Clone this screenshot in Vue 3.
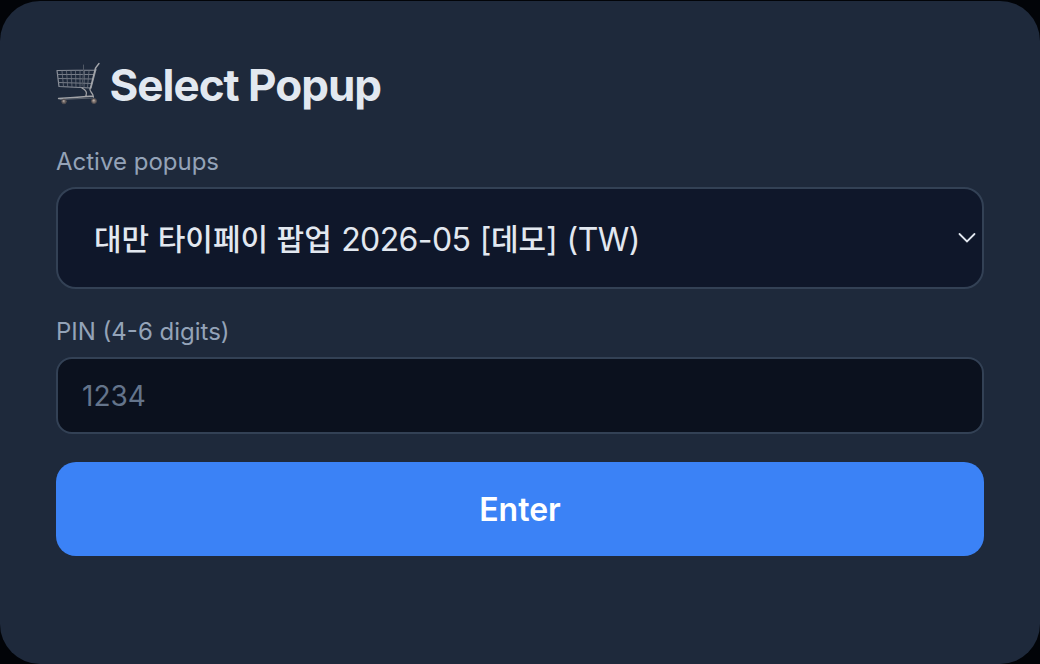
<script setup>
import { computed, ref } from 'vue'

const popups = [
  { id: 1, name: '대만 타이페이 팝업 2026-05 [데모]', country: 'TW' }
]

const selected = ref(1)
const pin = ref('')

// Hangul runs are set slightly smaller than the latin text around them
const parts = computed(() => {
  const p = popups.find((x) => x.id === selected.value)
  return `${p.name} (${p.country})`
    .split(/([가-힣]+(?: [가-힣]+)*)/)
    .filter(Boolean)
    .map((text) => ({ text, hangul: /[가-힣]/.test(text) }))
})

function nextPopup() {
  const i = popups.findIndex((x) => x.id === selected.value)
  selected.value = popups[(i + 1) % popups.length].id
}

function onEnter() {
  if (!/^\d{4,6}$/.test(pin.value)) return
  pin.value = ''
}
</script>

<template>
  <form class="card" @submit.prevent="onEnter">
    <h1 class="title">
      <svg class="cart" viewBox="0 0 46 46" fill="none" stroke-linecap="round">
        <path d="M2 11.5 41 11M2 11.5 4 27.5M41 10 36 29M4 27.5 36 29" stroke="#8b909a" stroke-width="1.2" />
        <path d="M3 15.5H39.5M3.3 19.5 38.5 20M3.8 23.5 37.5 24.5" stroke="#808690" stroke-width=".9" />
        <path d="M7 12 8.5 27.5M11.5 12 12.7 27.5M16 12 17 28M20.5 12 21 28M25 12V28M29.5 12 29 28.5M34 12 32.5 28.5" stroke="#6d7480" stroke-width=".8" />
        <path d="M28.5 6V13L27 27" stroke="#505865" stroke-width="1" />
        <path d="M44 4.5 40.5 9 35.5 29" stroke="#a5a7ac" stroke-width="1.4" />
        <path d="M27 29C31 31 32.5 33 31 36.5M35 29.5C34 33 38 33 38.5 38M38 37 19 38.5 3.5 39.5" stroke="#a3a4a8" stroke-width="1.3" />
        <path d="M5 40.5 38 39" stroke="#6b717b" stroke-width=".8" />
        <circle cx="9" cy="42.5" r="2.3" fill="#746b69" stroke="#514d50" />
        <circle cx="39" cy="42" r="2.5" fill="#827671" stroke="#514d50" />
        <circle cx="8.7" cy="42" r="1" fill="#a59b97" />
        <circle cx="38.7" cy="41.5" r="1.1" fill="#b5a9a2" />
      </svg>
      <span>Select Popup</span>
    </h1>

    <label class="label" for="popup">Active popups</label>
    <button id="popup" class="select" type="button" @click="nextPopup">
      <span class="value"><span v-for="(part, i) in parts" :key="i" :class="{ hangul: part.hangul }">{{ part.text }}</span></span>
      <svg class="chevron" viewBox="0 0 18 12" fill="none">
        <path d="M1.5 2 9 9.5 16.5 2" stroke="#e2e8f0" stroke-width="1.8" stroke-linecap="round" />
      </svg>
    </button>

    <label class="label" for="pin">PIN (4-6 digits)</label>
    <input id="pin" v-model="pin" class="pin" inputmode="numeric" maxlength="6" placeholder="1234" />

    <button class="enter" type="submit">Enter</button>
  </form>
</template>

<style>
body {
  background: #020408;
}
</style>

<style scoped>
.card {
  display: flex;
  flex-direction: column;
  box-sizing: border-box;
  height: 663px;
  margin-top: 1px;
  padding: 56px;
  border-radius: 40px;
  background: #1e293b;
  color: #e2e8f0;
  font-family: Inter, "Noto Sans CJK KR", sans-serif;
}

.title {
  display: flex;
  align-items: center;
  gap: 8.5px;
  height: 56px;
  margin: 0 0 35px;
  font-size: 44px;
  font-weight: 700;
  letter-spacing: -1px;
  white-space: nowrap;
}

.cart {
  width: 46px;
  height: 46px;
  margin: -7px 0 0 -1px;
}

.label {
  height: 28px;
  margin-bottom: 11px;
  color: #94a3b8;
  font-size: 24px;
  line-height: 28px;
}

.select {
  display: flex;
  align-items: center;
  justify-content: space-between;
  box-sizing: border-box;
  height: 102px;
  margin-bottom: 29px;
  padding: 0 6px 0 36px;
  border: 2px solid #334155;
  border-radius: 20px;
  background: #0f172a;
  color: #e2e8f0;
  font-family: inherit;
  font-size: 32px;
  letter-spacing: -0.6px;
  word-spacing: 1px;
  cursor: pointer;
}

.value {
  padding-bottom: 3px;
  white-space: pre;
}

.hangul {
  font-size: 30px;
  font-weight: 500;
  letter-spacing: 0;
  word-spacing: 0.5px;
  vertical-align: 1px;
}

.chevron {
  width: 18px;
  height: 12px;
}

.pin {
  box-sizing: border-box;
  height: 77px;
  margin-bottom: 28px;
  padding: 0 24px;
  border: 2px solid #334155;
  border-radius: 16px;
  background: #0b111e;
  color: #e2e8f0;
  font-family: inherit;
  font-size: 28px;
}

.pin::placeholder {
  color: #64748b;
}

.enter {
  height: 94px;
  padding: 0;
  border: none;
  border-radius: 20px;
  background: #3b82f6;
  color: #fff;
  font-family: inherit;
  font-size: 32px;
  font-weight: 600;
  cursor: pointer;
}
</style>
